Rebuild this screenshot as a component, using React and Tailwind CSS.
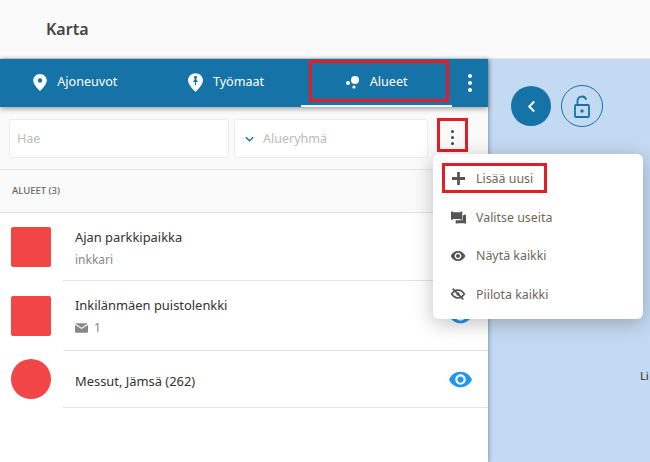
import React from 'react';

const font = { fontFamily: '"Noto Sans", sans-serif' };

const EyeIcon = ({ className }) => (
  <svg viewBox="0 0 24 24" className={className} fill="currentColor">
    <path d="M12 4.500C7 4.500 2.730 7.610 1 12c1.730 4.390 6 7.500 11 7.500s9.270-3.110 11-7.500c-1.730-4.390-6-7.500-11-7.500zM12 17c-2.760 0-5-2.240-5-5s2.240-5 5-5 5 2.240 5 5-2.240 5-5 5zm0-8c-1.660 0-3 1.340-3 3s1.340 3 3 3 3-1.340 3-3-1.340-3-3-3z" />
  </svg>
);

const EyeOffIcon = ({ className }) => (
  <svg viewBox="0 0 24 24" className={className} fill="none" stroke="currentColor" strokeWidth="2.400">
    <path d="M2.500 12C5 8 8.200 6.200 12 6.200S19 8 21.500 12C19 16 15.800 17.800 12 17.800S5 16 2.500 12z" />
    <circle cx="12" cy="12" r="2.500" fill="currentColor" stroke="none" />
    <path d="M4 4l16 16" strokeWidth="2.600" />
  </svg>
);

const PinIcon = () => (
  <svg viewBox="0 0 16 20" className="h-[17px] w-[14px]" fill="white">
    <path fillRule="evenodd" d="M8 0C3.600 0 0 3.400 0 7.700 0 13 8 20 8 20s8-7 8-12.300C16 3.400 12.400 0 8 0zm0 10.200a2.600 2.600 0 110-5.200 2.600 2.600 0 010 5.200z" />
  </svg>
);

const Tab = ({ icon, label, active }) => (
  <div className={`flex flex-1 items-center justify-center gap-[10px] border-b-2 pt-[1px] text-[12.600px] text-white ${active ? 'border-[#f5f5f5]' : 'border-transparent'}`}>
    {icon}
    <span>{label}</span>
  </div>
);

const Kebab = ({ className }) => (
  <div className={`flex flex-col items-center gap-[3px] ${className}`}>
    <span className="h-[3px] w-[3px] rounded-full bg-current" />
    <span className="h-[3px] w-[3px] rounded-full bg-current" />
    <span className="h-[3px] w-[3px] rounded-full bg-current" />
  </div>
);

const Row = ({ title, sub, round, height, eye, mail }) => (
  <div className={`flex bg-white ${height}`}>
    <div className={`flex w-[63px] shrink-0 items-center pl-[11px] ${round ? 'pb-[2px]' : ''}`}>
      <div className={`h-10 w-10 bg-[#f24646] ${round ? 'rounded-full' : 'rounded-[2px]'}`} />
    </div>
    <div className="flex flex-1 items-center justify-between border-b border-[#e2e2e2] pr-[15px] pl-[12px]">
      <div className={round || sub ? 'pt-[4px]' : 'pt-[2px]'}>
        <div className="text-[12.900px] leading-[20px] text-[#333]">{title}</div>
        {sub && <div className="mt-[3px] text-[12px] leading-[20px] text-[#888]">{sub}</div>}
        {mail && (
          <div className="mt-[3px] flex items-center gap-[6px] text-[12px] leading-[20px] text-[#888]">
            <svg viewBox="0 0 14 10" className="h-[10px] w-[13px]" fill="#888">
              <path d="M1 0h12a1 1 0 01.600.200L7 4.600.400.200A1 1 0 011 0zM0 1.400V9a1 1 0 001 1h12a1 1 0 001-1V1.400L7 6z" />
            </svg>
            1
          </div>
        )}
      </div>
      {eye && <EyeIcon className="h-[25px] w-[25px] text-[#2196f3]" />}
    </div>
  </div>
);

const MenuItem = ({ icon, label }) => (
  <div className="flex h-[38.500px] items-center gap-[10px] pl-[17px] text-[12.400px] text-[#6f675c]">
    <span className="flex w-[16px] justify-center text-[#555]">{icon}</span>
    <span className="pt-[2px]">{label}</span>
  </div>
);

export default function App() {
  return (
    <div className="relative flex h-[462px] w-[650px] flex-col overflow-hidden bg-[#fafafa]" style={font}>
      <div className="flex h-[59px] shrink-0 items-center border-b border-[#e6e6e6] bg-[#fafafa] pl-[46px] text-[16px] font-semibold text-[#444]">
        Karta
      </div>

      <div className="flex min-h-0 flex-1">
        <div className="relative z-10 flex w-[488px] shrink-0 flex-col bg-white shadow-[1px_0_4px_rgba(0,0,0,0.3)]">
          <div className="relative z-10 flex h-[48px] shrink-0 bg-[#1673a8] shadow-[0_2px_5px_rgba(0,0,0,0.35)]">
            <Tab label="Ajoneuvot" icon={<PinIcon />} />
            <Tab
              label="Työmaat"
              icon={
                <svg viewBox="0 0 16 20" className="h-[19px] w-[15px]" fill="white">
                  <path fillRule="evenodd" d="M8 0C3.600 0 0 3.400 0 7.700 0 13 8 20 8 20s8-7 8-12.300C16 3.400 12.400 0 8 0zM6.600 3h2.800v1.600L8.900 7l1.400 1.400v1H8.600V13H7.400V9.400H5.700v-1L7.100 7l-.5-2.400z" />
                </svg>
              }
            />
            <Tab
              active
              label="Alueet"
              icon={
                <svg viewBox="0 0 14 13" className="h-[13px] w-[14px]" fill="white">
                  <circle cx="9" cy="4" r="4" />
                  <circle cx="2" cy="7" r="2" />
                  <circle cx="8" cy="11" r="1.600" />
                </svg>
              }
            />
            <div className="flex w-[36px] shrink-0 items-center justify-center">
              <Kebab className="text-white [&>span]:h-[4px] [&>span]:w-[4px]" />
            </div>
            <div className="absolute top-[1px] left-[309px] h-[42px] w-[140px] border-[3px] border-[#e01e26]" />
          </div>

          <div className="flex h-[63px] shrink-0 items-center gap-[5px] border-b border-[#e6e6e6] bg-[#fafafa] pr-[60px] pl-[9px]">
            <div className="flex h-[39px] w-[220px] items-center rounded-[3px] border border-[#ececec] bg-white pt-[2px] pl-[7px] text-[12.500px] text-[#bbb]">
              Hae
            </div>
            <div className="flex h-[39px] w-[194px] items-center gap-[9px] rounded-[3px] border border-[#ececec] bg-white pt-[2px] pl-[10px] text-[12.500px] text-[#bbb]">
              <svg viewBox="0 0 10 6" className="h-[6px] w-[9px]" fill="none" stroke="#1673a8" strokeWidth="1.600">
                <path d="M1 1l4 4 4-4" />
              </svg>
              Alueryhmä
            </div>
          </div>

          <div className="flex h-[43px] shrink-0 items-center border-b border-[#e2e2e2] bg-[#fafafa] pl-[12px] text-[9.500px] font-medium text-[#666]">
            ALUEET (3)
          </div>

          <Row title="Ajan parkkipaikka" sub="inkkari" height="h-[68px]" />
          <Row title="Inkilänmäen puistolenkki" mail height="h-[70px]" eye />
          <Row title="Messut, Jämsä (262)" round height="h-[57px]" eye />
          <div className="flex-1 bg-white" />
        </div>

        <div className="relative flex-1 bg-[#c4daf2]">
          <div className="flex items-center gap-[10px] pt-[26px] pl-[23px]">
            <div className="flex h-10 w-10 items-center justify-center rounded-full bg-[#1673a8]">
              <svg viewBox="0 0 10 14" className="h-[13px] w-[9px]" fill="none" stroke="white" strokeWidth="2.200">
                <path d="M8 1.500L2.500 7 8 12.500" />
              </svg>
            </div>
            <div className="flex h-[42px] w-[42px] items-center justify-center rounded-full border border-[#1673a8]">
              <svg viewBox="0 0 16 23" className="h-[23px] w-[16px]" fill="none" stroke="#1673a8" strokeWidth="1.800">
                <path d="M3.500 10V6a4.500 4.500 0 018.800-1.300" />
                <rect x="1" y="10" width="14" height="12" rx="1" />
                <circle cx="8" cy="16" r="1.700" fill="#1673a8" stroke="none" />
              </svg>
            </div>
          </div>
          <span className="absolute top-[309px] left-[152px] text-[11px] font-medium text-[#444]">Li</span>
        </div>
      </div>

      <div className="absolute top-[118px] z-20 left-[437px] flex h-[34px] w-[31px] items-center justify-center border-[3px] border-[#e01e26] pt-[5px]">
        <Kebab className="text-[#444]" />
      </div>

      <div className="absolute top-[154px] z-20 left-[433px] flex h-[165px] w-[210px] flex-col justify-center rounded-[6px] bg-white shadow-[0_4px_20px_rgba(0,0,0,0.25)]">
        <MenuItem
          label="Lisää uusi"
          icon={
            <svg viewBox="0 0 14 14" className="h-[13px] w-[13px]" fill="#555">
              <path d="M5.500 0h3v5.500H14v3H8.500V14h-3V8.500H0v-3h5.500z" />
            </svg>
          }
        />
        <MenuItem
          label="Valitse useita"
          icon={
            <svg viewBox="0 0 16 13" className="h-[13px] w-[15px]" fill="#555">
              <path d="M0 0h2v1h8V0h2v9h-2V8H2v1H0z" />
              <path d="M5 9.500h7.500V4H14v-.500h2V13h-2v-.500H7V13H5z" />
            </svg>
          }
        />
        <MenuItem label="Näytä kaikki" icon={<EyeIcon className="h-[16px] w-[16px]" />} />
        <MenuItem label="Piilota kaikki" icon={<EyeOffIcon className="h-[16px] w-[16px]" />} />
        <div className="absolute top-[9px] left-[9px] h-[30px] w-[105px] border-[3px] border-[#e01e26]" />
      </div>
    </div>
  );
}
